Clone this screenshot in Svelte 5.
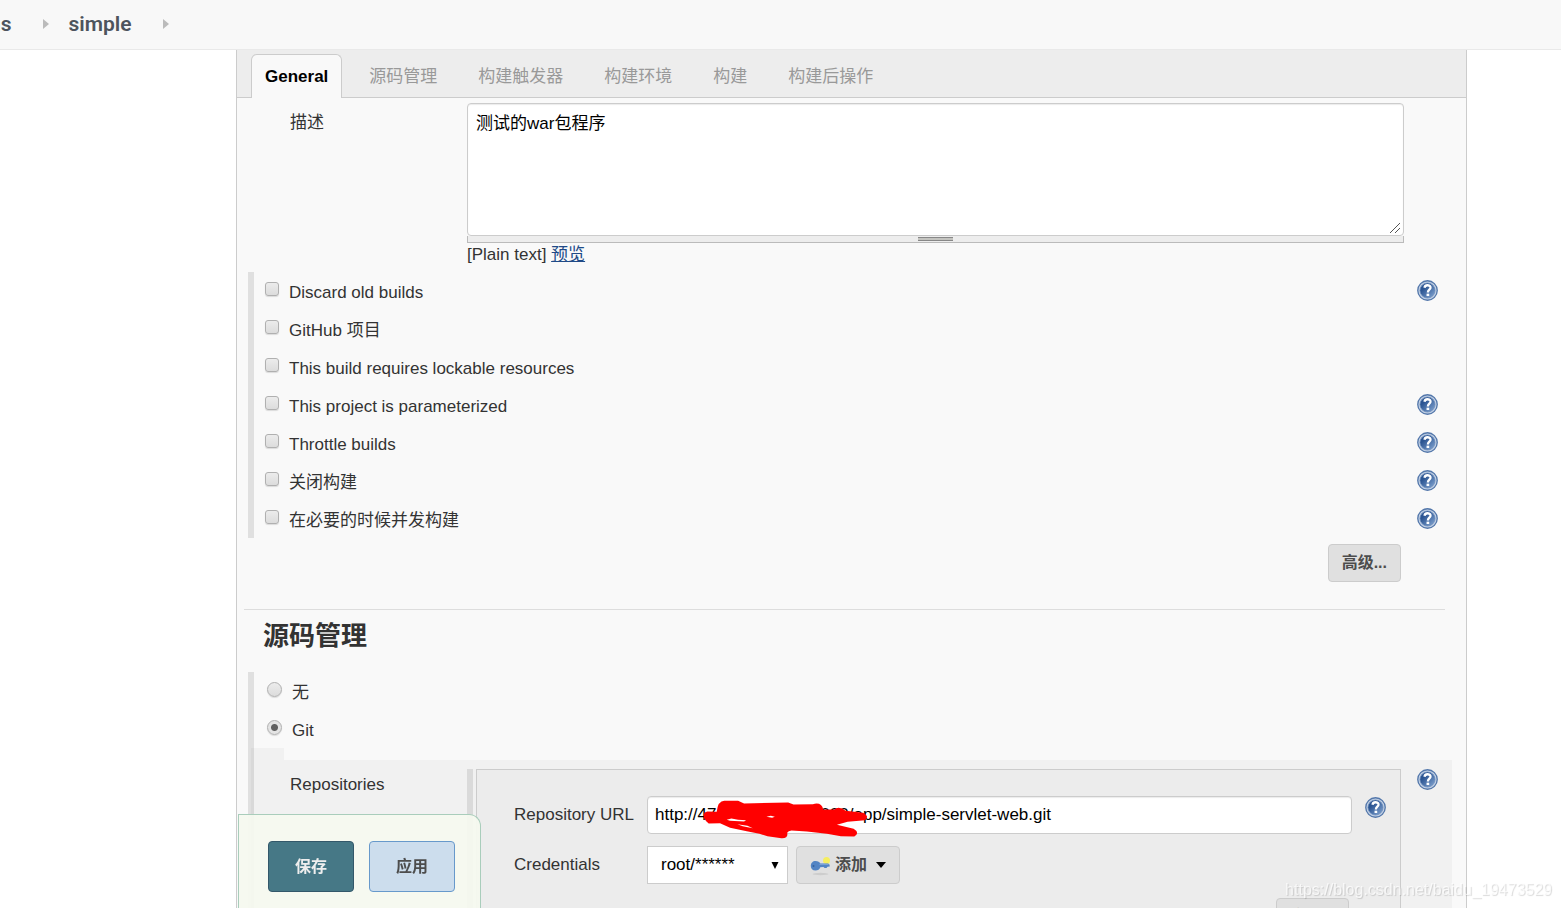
<script>
    import { onMount } from "svelte";

    const tabs = ["General", "源码管理", "构建触发器", "构建环境", "构建", "构建后操作"];

    const options = [
        { id: "discard", label: "Discard old builds", help: true },
        { id: "github", label: "GitHub 项目", help: false },
        { id: "lockable", label: "This build requires lockable resources", help: false },
        { id: "params", label: "This project is parameterized", help: true },
        { id: "throttle", label: "Throttle builds", help: true },
        { id: "disable", label: "关闭构建", help: true },
        { id: "concurrent", label: "在必要的时候并发构建", help: true },
    ];

    let activeTab = $state("General");
    let description = $state("测试的war包程序");
    let checked = $state({});
    let scm = $state("git");
    let url = $state("http://47.00.000.000:0000/app/simple-servlet-web.git");
    let credentials = $state("root/******");

    onMount(() => {
        document.title = "simple Config";
    });
</script>

{#snippet help(name)}
    <button type="button" class="help" aria-label={"Help: " + name}>
        <svg width="21" height="21" viewBox="0 0 22 22">
            <defs>
                <linearGradient id="help-fill" x1="0" y1="0" x2="1" y2="1">
                    <stop offset="0.3" stop-color="#2c5592" />
                    <stop offset="1" stop-color="#86a8d4" />
                </linearGradient>
            </defs>
            <circle cx="11" cy="11" r="10.2" fill="#c3d1e5" stroke="#5478ab" stroke-width="1.4" />
            <circle cx="11" cy="11" r="7.9" fill="url(#help-fill)" stroke="#6c8cba" stroke-width="0.8" />
            <path
                d="M7.8 8 C8.2 6.2 9.8 5.4 11.3 5.5 C13.6 5.7 14.6 7.2 14 8.8 C13.4 10.3 11.4 10.5 11.4 13"
                fill="none"
                stroke="#fff"
                stroke-width="2.4"
            />
            <rect x="10" y="14.300" width="2.800" height="2.500" fill="#fff" />
        </svg>
    </button>
{/snippet}

<div class="page">
    <nav class="breadcrumbs">
        <a href="#jobs">ns</a>
        <span class="arrow"></span>
        <a href="#simple">simple</a>
        <span class="arrow"></span>
    </nav>

    <main class="panel">
        <div class="tabs" role="tablist">
            {#each tabs as tab}
                <button
                    type="button"
                    role="tab"
                    class="tab"
                    class:active={tab === activeTab}
                    aria-selected={tab === activeTab}
                    onclick={() => (activeTab = tab)}
                >
                    {tab}
                </button>
            {/each}
        </div>

        <div class="description">
            <label for="description">描述</label>
            <div class="editor">
                <textarea id="description" bind:value={description}></textarea>
                <div class="handle"><span></span></div>
                <div class="preview">[Plain text] <a href="#preview">预览</a></div>
            </div>
        </div>

        <div class="group">
            {#each options as option}
                <div class="option">
                    <input type="checkbox" id={option.id} bind:checked={checked[option.id]} />
                    <label for={option.id}>{option.label}</label>
                    {#if option.help}
                        {@render help(option.label)}
                    {/if}
                </div>
            {/each}
        </div>

        <div class="advanced">
            <button type="button" class="btn">高级...</button>
        </div>

        <h2>源码管理</h2>

        <div class="group">
            <div class="option radio">
                <input type="radio" id="scm-none" name="scm" value="none" bind:group={scm} />
                <label for="scm-none">无</label>
            </div>
            <div class="option radio">
                <input type="radio" id="scm-git" name="scm" value="git" bind:group={scm} />
                <label for="scm-git">Git</label>
            </div>

            <div class="notch"></div>
            <div class="nested">
                <div class="nested-label">Repositories</div>
                <div class="repo-bar"></div>
                <div class="repo">
                    <div class="field">
                        <label for="repo-url">Repository URL</label>
                        <div class="url">
                            <input type="text" id="repo-url" bind:value={url} />
                            <svg class="scribble" width="167" height="41" viewBox="216 56 500 122">
                                <path
                                    d="M232 93 L260 94 Q264 60 284 61 L324 61 L342 69 L474 66 L490 72 L548 71 Q574 64 579 87 L612 87 Q626 75 646 91 L698 97 Q719 108 704 119 L652 124 L620 133 L670 145 Q690 157 672 168 L632 167 L590 160 L530 153 L484 150 Q474 151 471 157 Q475 174 454 173 L412 167 L388 160 L350 152 L300 142 L270 128 L236 129 Q214 112 224 96 Z"
                                    fill="#f00"
                                />
                                <path d="M290 118 L304 114 L324 118 L348 119 L342 123 L300 121 Z" fill="#fff" />
                                <path d="M322 131 L352 136 L368 143 L338 137 Z" fill="#fff" />
                                <path d="M409 109 L422 106 L434 109 L426 112 Z" fill="#fff" />
                            </svg>
                        </div>
                        {@render help("Repository URL")}
                    </div>
                    <div class="field">
                        <label for="credentials">Credentials</label>
                        <div class="select">
                            <select id="credentials" bind:value={credentials}>
                                <option>root/******</option>
                                <option>- none -</option>
                            </select>
                            <svg width="8" height="7" viewBox="0 0 8 7">
                                <path d="M0.5 0 H7.5 L4 7 Z" fill="#000" />
                            </svg>
                        </div>
                        <button type="button" class="btn add">
                            <svg width="21" height="22" viewBox="0 0 21 22">
                                <ellipse cx="10.5" cy="20" rx="8" ry="1.2" fill="#cdcdcd" />
                                <circle cx="16.5" cy="6.5" r="3.5" fill="#f5ee60" />
                                <path
                                    d="M5.5 7 C8 7 9.7 8 10.3 9.5 L18 9.5 Q20 10 19.8 12.5 L17.5 12.8 L16.5 14 L14.5 14 L13.5 13 L10.3 13.2 C9.5 15.4 8 16.5 5.5 16.5 C2.5 16.5 0.8 14.5 0.8 12 C0.8 9 2.8 7 5.5 7 Z"
                                    fill="#5284c4"
                                />
                                <circle cx="3.5" cy="12" r="1" fill="#35619e" />
                                <path d="M9.5 10.3 H18.5" stroke="#82a9dc" stroke-width="1" />
                            </svg>
                            添加
                            <svg class="caret" width="10" height="6" viewBox="0 0 10 6">
                                <path d="M0 0 H10 L5 6 Z" fill="#000" />
                            </svg>
                        </button>
                    </div>
                    <div class="repo-advanced">
                        <button type="button" class="btn">高级...</button>
                    </div>
                </div>
                {@render help("Repositories")}
            </div>
        </div>
    </main>

    <div class="sticker">
        <button type="button" class="save">保存</button>
        <button type="button" class="apply">应用</button>
    </div>

    <div class="watermark">https://blog.csdn.net/baidu_19473529</div>
</div>

<style>
    :global(body) {
        margin: 0;
        background: #fff;
    }

    * {
        box-sizing: border-box;
    }

    .page,
    button,
    input,
    select,
    textarea {
        font-family: "Liberation Sans", "Noto Sans CJK SC", sans-serif;
        font-size: 17px;
        line-height: 24px;
    }

    .page {
        height: 100vh;
        overflow: hidden;
        color: #333;
    }

    button {
        cursor: pointer;
    }

    .breadcrumbs {
        display: flex;
        align-items: center;
        height: 50px;
        margin-left: -11px;
        padding-bottom: 2px;
        background: #f8f8f8;
        border-bottom: 1px solid #e9e9e9;
    }

    .breadcrumbs a {
        font-family: Roboto, sans-serif;
        font-size: 21px;
        font-weight: 600;
        color: #4d545d;
        text-decoration: none;
    }

    .arrow {
        margin: 0 20px 0 31px;
        border: 5px solid transparent;
        border-left: 6px solid #bbb;
        border-right-width: 0;
    }

    .panel {
        margin: 0 94px 0 236px;
        background: #f9f9f9;
        border: 1px solid #ccc;
        border-top: none;
    }

    .tabs {
        display: flex;
        gap: 13px;
        height: 48px;
        padding: 4px 14px 0;
        background: #ededed;
        border-bottom: 1px solid #ccc;
    }

    .tab {
        height: 44px;
        padding: 0 13px;
        border: 1px solid transparent;
        border-bottom: none;
        border-radius: 6px 6px 0 0;
        background: none;
        color: #999;
    }

    .tab.active {
        border-color: #ccc;
        background: #f9f9f9;
        font-weight: bold;
        color: #000;
    }

    .description {
        display: flex;
        padding: 5px 62px 0 53px;
    }

    .description label {
        width: 177px;
        padding-top: 8px;
    }

    .editor {
        flex: 1;
    }

    textarea {
        display: block;
        width: 100%;
        height: 133px;
        padding: 8px;
        border: 1px solid #ccc;
        border-radius: 4px;
        box-shadow: inset 0 1px 1px rgba(0, 0, 0, 0.08);
        color: #000;
        resize: both;
    }

    textarea::-webkit-resizer {
        background: url("data:image/svg+xml,%3Csvg xmlns='http://www.w3.org/2000/svg' width='15' height='15'%3E%3Cpath d='M2 13L12 3M7 13L12 8' stroke='%23555'/%3E%3C/svg%3E")
            no-repeat bottom right;
    }

    .handle {
        display: flex;
        justify-content: center;
        height: 7px;
        padding-top: 1px;
        background: #ededed;
        border: 1px solid #bbb;
        border-top: none;
    }

    .handle span {
        width: 35px;
        height: 4px;
        background: #c4c4c0;
        border: 1px solid #888;
        border-left: none;
        border-right: none;
    }

    .preview a {
        color: #204a87;
    }

    .group {
        margin: 5px 14px 0 11px;
        border-left: 6px solid #e0e0e0;
    }

    .option {
        display: flex;
        align-items: flex-start;
        height: 38px;
        padding: 8px 14px 0 11px;
    }

    .option label {
        flex: 1;
        margin-left: 10px;
        padding-top: 1px;
    }

    .option input {
        appearance: none;
        width: 14px;
        height: 14px;
        margin: 2px 0 0;
        border: 1px solid #b0b0b0;
        border-radius: 3px;
        background: linear-gradient(#ececec, #dcdcdc);
        box-shadow: 0 1px 1px rgba(0, 0, 0, 0.12);
    }

    .option input:checked {
        background: radial-gradient(circle, #606060 3px, #e4e4e4 4px);
    }

    .option.radio {
        padding-left: 13px;
    }

    .option.radio input {
        width: 15px;
        height: 15px;
        border-radius: 50%;
    }

    .help {
        display: flex;
        padding: 0;
        border: none;
        background: none;
    }

    .btn {
        height: 38px;
        padding: 0 13px;
        border: 1px solid #ccc;
        border-radius: 4px;
        background: #e0e0e0;
        font-size: 16px;
        font-weight: bold;
        color: #4d4d4d;
    }

    .advanced {
        display: flex;
        justify-content: flex-end;
        margin: 0 21px 0 7px;
        padding: 6px 44px 27px 0;
        border-bottom: 1px solid #ddd;
    }

    h2 {
        margin: 0 26px 16px;
        padding-top: 6px;
        font-size: 26px;
        line-height: 40px;
    }

    .notch {
        width: 33px;
        height: 12px;
        margin-left: -3px;
        background: rgba(0, 0, 0, 0.03);
    }

    .nested {
        display: flex;
        align-items: flex-start;
        margin-left: -3px;
        padding: 9px 14px 0 39px;
        background: rgba(0, 0, 0, 0.03);
    }

    .nested-label {
        width: 177px;
        padding-top: 4px;
    }

    .repo-bar {
        align-self: stretch;
        width: 6px;
        margin-right: 3px;
        background: #dadada;
    }

    .repo {
        flex: 1;
        margin-right: 16px;
        padding: 26px 14px 0 37px;
        border: 1px solid #ccc;
        background: #ececec;
    }

    .field {
        display: flex;
        height: 50px;
    }

    .field label {
        width: 133px;
        padding-top: 7px;
    }

    .url {
        position: relative;
        flex: 1;
        margin-right: 13px;
    }

    .url input {
        width: 100%;
        height: 38px;
        padding: 0 7px;
        border: 1px solid #ccc;
        border-radius: 4px;
        box-shadow: inset 0 1px 1px rgba(0, 0, 0, 0.08);
        color: #000;
    }

    .scribble {
        position: absolute;
        top: 3px;
        left: 55px;
        pointer-events: none;
    }

    .select {
        position: relative;
        width: 141px;
        margin-right: 8px;
    }

    .select select {
        appearance: none;
        width: 100%;
        height: 38px;
        padding: 0 13px;
        border: 1px solid #ccc;
        border-radius: 0;
        background: #fff;
        color: #000;
    }

    .select svg {
        position: absolute;
        top: 16px;
        right: 9px;
        pointer-events: none;
    }

    .add {
        display: flex;
        align-items: center;
        gap: 4px;
    }

    .caret {
        margin-left: 5px;
    }

    .repo-advanced {
        display: flex;
        justify-content: flex-end;
        padding: 2px 37px 20px 0;
    }

    .field .help {
        align-self: flex-start;
        padding-top: 1px;
    }

    .sticker {
        position: fixed;
        bottom: 0;
        left: 238px;
        display: flex;
        gap: 15px;
        padding: 26px 25px 16px 29px;
        border: 1px solid #a9cdbb;
        border-bottom: none;
        border-radius: 0 12px 0 0;
        background: rgba(245, 249, 239, 0.95);
    }

    .sticker button {
        height: 51px;
        padding: 0 26px;
        border-radius: 4px;
        font-size: 16px;
        font-weight: bold;
    }

    .save {
        border: 1px solid #33586a;
        background: #467886;
        color: #eee;
    }

    .apply {
        border: 1px solid #6799cb;
        background: #ccdded;
        color: #4d4d4d;
    }

    .watermark {
        position: fixed;
        right: 9px;
        bottom: 6px;
        font-size: 16px;
        color: rgba(255, 255, 255, 0.7);
        text-shadow: 1px 1px 1px rgba(0, 0, 0, 0.15);
        pointer-events: none;
    }
</style>
